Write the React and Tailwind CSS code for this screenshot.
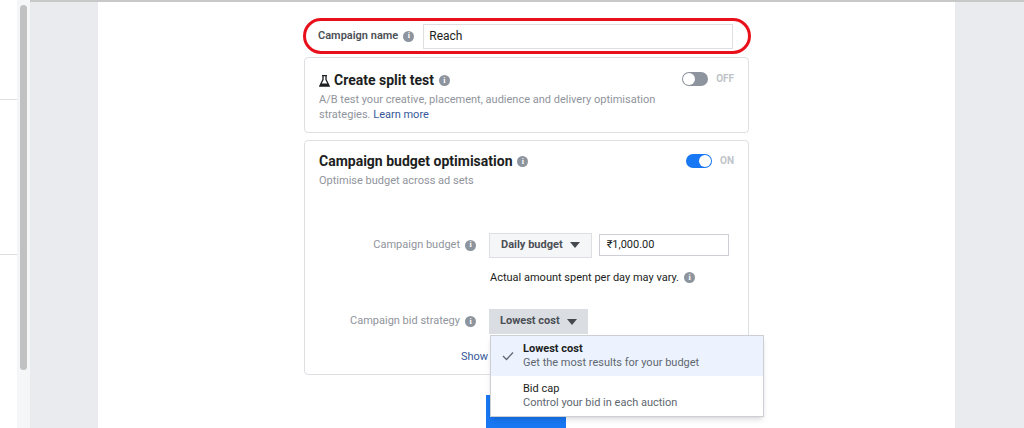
const F = { fontFamily: '"Helvetica Neue", Roboto, "Liberation Sans", Arial, sans-serif' };

function Info() {
  return (
    <span className="inline-flex items-center justify-center w-[11px] h-[11px] rounded-full bg-[#8d949e] text-white text-[8px] font-bold leading-none ml-[5px] align-middle" style={{ fontFamily: '"Liberation Serif", serif' }}>i</span>
  );
}
function Caret() {
  return <svg width="10" height="6" viewBox="0 0 10 6" className="ml-[7px]"><path d="M0 0h10L5 6z" fill="#444950" /></svg>;
}

export default function App() {
  return (
    <div className="w-[1024px] h-[428px] overflow-hidden flex bg-white text-[#1c1e21]" style={F}>
      <div className="w-[17px] flex flex-col">
        <div className="h-[100px] border-b border-[#dddfe2]" />
        <div className="h-[155px] border-b border-[#dddfe2]" />
      </div>
      <div className="w-[13px] bg-[#f5f6f7] pt-[5px] flex justify-center">
        <div className="w-[7px] h-[365px] rounded-full bg-[#c1c1c1]" />
      </div>
      <div className="flex-1 flex border-t-2 border-[#c8c8c8]">
        <div className="w-[68px] bg-[#e9ebee]" />
        <div className="w-[857px] bg-white relative">
          <div className="ml-[206px] w-[445px] pt-[16px] flex flex-col">
            <div className="relative h-[36px] -mx-[1px] w-[448px] border-[3px] border-[#e8101a] rounded-[18px] flex items-center pl-[12px]">
              <span className="text-[11px] font-semibold text-[#4b4f56]">Campaign name</span><Info />
              <div className="ml-[9px] w-[310px] h-[25px] border border-[#dddfe2] flex items-center px-[5px] text-[12px]">Reach</div>
            </div>
            <div className="mt-[3px] h-[76px] border border-[#dddfe2] rounded-[4px] px-[14px] pt-[12px] relative">
              <div className="flex items-center text-[14px] font-bold">
                <svg width="11" height="12" viewBox="0 0 11 12" className="mr-[4px]"><path d="M3 0.5h5M4 0.5v4L0.8 11h9.4L7 4.5v-4" stroke="#1c1e21" strokeWidth="1.3" fill="none" /><path d="M2 8.5h7L10 11H1z" fill="#1c1e21" /></svg>
                Create split test<Info /></div>
              <div className="text-[11px] text-[#90949c] leading-[15px] mt-[1px] w-[340px]">A/B test your creative, placement, audience and delivery optimisation strategies. <span className="text-[#365899]">Learn more</span></div>
              <div className="absolute right-[14px] top-[13px] flex items-center gap-[8px]">
                <div className="w-[26px] h-[14px] rounded-full bg-[#8d949e] relative"><div className="absolute left-[1px] top-[1px] w-[12px] h-[12px] rounded-full bg-white" /></div>
                <span className="text-[10px] font-bold text-[#bec3c9]">OFF</span>
              </div>
            </div>
            <div className="mt-[7px] h-[235px] border border-[#dddfe2] rounded-[4px] px-[14px] pt-[10px] relative">
              <div className="flex items-center text-[14px] font-bold">Campaign budget optimisation<Info /></div>
              <div className="text-[11px] text-[#90949c] mt-[1px]">Optimise budget across ad sets</div>
              <div className="absolute right-[14px] top-[12px] flex items-center gap-[8px]">
                <div className="w-[26px] h-[14px] rounded-full bg-[#1877f2] relative"><div className="absolute right-[1px] top-[1px] w-[12px] h-[12px] rounded-full bg-white" /></div>
                <span className="text-[10px] font-bold text-[#bec3c9]">ON</span>
              </div>
              <div className="mt-[43px] flex items-center">
                <div className="w-[157px] flex justify-end items-center text-[11px] text-[#90949c]">Campaign budget<Info /></div>
                <div className="ml-[13px] h-[25px] px-[11px] bg-[#f5f6f7] border border-[#dddfe2] flex items-center text-[11px] font-bold text-[#4b4f56]">Daily budget<Caret /></div>
                <div className="ml-[7px] w-[130px] h-[22px] border border-[#ccd0d5] flex items-center px-[7px] text-[11px]">₹1,000.00</div>
              </div>
              <div className="ml-[171px] mt-[12px] flex items-center text-[11px]">Actual amount spent per day may vary.<Info /></div>
              <div className="mt-[23px] flex items-center">
                <div className="w-[157px] flex justify-end items-center text-[11px] text-[#90949c]">Campaign bid strategy<Info /></div>
                <div className="ml-[13px] h-[25px] px-[11px] bg-[#dadde1] flex items-center text-[11px] font-bold text-[#4b4f56]">Lowest cost<Caret /></div>
              </div>
              <div className="ml-[142px] mt-[15px] text-[11px] text-[#365899]">Show</div>
            </div>
            <div className="ml-[182px] mt-[20px] w-[80px] h-[40px] bg-[#1877f2]" />
          </div>
          <div className="absolute left-[392px] top-[333px] w-[274px] bg-white border border-[#ccd0d5] shadow-md text-[11px]">
            <div className="bg-[#ecf3ff] h-[40px] flex items-center">
              <svg width="12" height="10" viewBox="0 0 12 10" className="ml-[11px] mr-[9px]"><path d="M1 5l3.5 3.5L11 1.5" stroke="#606770" strokeWidth="1.3" fill="none" /></svg>
              <div><div className="font-bold leading-[14px]">Lowest cost</div><div className="text-[#606770] leading-[14px]">Get the most results for your budget</div></div>
            </div>
            <div className="h-[40px] flex items-center pl-[32px]">
              <div><div className="leading-[14px]">Bid cap</div><div className="text-[#606770] leading-[14px]">Control your bid in each auction</div></div>
            </div>
          </div>
        </div>
        <div className="flex-1 bg-[#e9ebee]" />
      </div>
    </div>
  );
}
